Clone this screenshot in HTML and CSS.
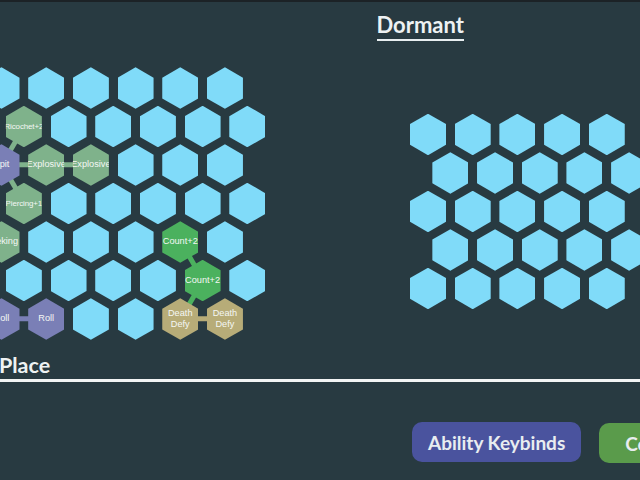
FILE: index.html
```html
<!DOCTYPE html>
<html lang="en">
  <head>
    <meta charset="UTF-8" />
    <meta name="viewport" content="width=device-width, initial-scale=1.0" />
    <title>Abilities</title>
    <link rel="stylesheet" href="styles.css">
  </head>
  <body>
    <div class="boards">
      <!-- Active board -->
      <div class="panel panel-active">
        <div class="grid">
          <svg class="links" width="270" height="280">
            <line class="link-sage" x1="40.35" y1="59.25" x2="18" y2="97.75" />
            <line class="link-sage" x1="18" y1="97.75" x2="107.4" y2="97.75" />
            <line class="link-sage" x1="18" y1="97.75" x2="40.35" y2="136.25" />
            <line class="link-violet" x1="18" y1="251.75" x2="62.7" y2="251.75" />
            <line class="link-green" x1="196.8" y1="174.75" x2="219.15" y2="213.25" />
            <line class="link-green" x1="219.15" y1="213.25" x2="196.8" y2="251.75" />
            <line class="link-tan" x1="196.8" y1="251.75" x2="241.5" y2="251.75" />
          </svg>
          <div class="row">
            <div class="hex"></div><div class="hex"></div><div class="hex"></div>
            <div class="hex"></div><div class="hex"></div><div class="hex"></div>
          </div>
          <div class="row odd">
            <div class="hex sage tiny">Ricochet+2</div><div class="hex"></div><div class="hex"></div>
            <div class="hex"></div><div class="hex"></div><div class="hex"></div>
          </div>
          <div class="row">
            <div class="hex violet">Spit</div><div class="hex sage">Explosive</div><div class="hex sage">Explosive</div>
            <div class="hex"></div><div class="hex"></div><div class="hex"></div>
          </div>
          <div class="row odd">
            <div class="hex sage tiny">Piercing+1</div><div class="hex"></div><div class="hex"></div>
            <div class="hex"></div><div class="hex"></div><div class="hex"></div>
          </div>
          <div class="row">
            <div class="hex sage">Seeking</div><div class="hex"></div><div class="hex"></div>
            <div class="hex"></div><div class="hex green">Count+2</div><div class="hex"></div>
          </div>
          <div class="row odd">
            <div class="hex"></div><div class="hex"></div><div class="hex"></div>
            <div class="hex"></div><div class="hex green">Count+2</div><div class="hex"></div>
          </div>
          <div class="row">
            <div class="hex violet">Roll</div><div class="hex violet">Roll</div><div class="hex"></div>
            <div class="hex"></div><div class="hex tan">Death Defy</div><div class="hex tan">Death Defy</div>
          </div>
        </div>
      </div>

      <!-- Dormant board -->
      <div class="panel panel-dormant">
        <h2 class="board-title">Dormant</h2>
        <div class="grid">
          <div class="row">
            <div class="hex"></div><div class="hex"></div><div class="hex"></div><div class="hex"></div><div class="hex"></div>
          </div>
          <div class="row odd">
            <div class="hex"></div><div class="hex"></div><div class="hex"></div><div class="hex"></div><div class="hex"></div>
          </div>
          <div class="row">
            <div class="hex"></div><div class="hex"></div><div class="hex"></div><div class="hex"></div><div class="hex"></div>
          </div>
          <div class="row odd">
            <div class="hex"></div><div class="hex"></div><div class="hex"></div><div class="hex"></div><div class="hex"></div>
          </div>
          <div class="row">
            <div class="hex"></div><div class="hex"></div><div class="hex"></div><div class="hex"></div><div class="hex"></div>
          </div>
        </div>
      </div>
    </div>

    <h2 class="section-title">Place</h2>

    <div class="actions">
      <button class="btn btn-blue">Ability Keybinds</button>
      <button class="btn btn-green">Confirm</button>
    </div>
  </body>
</html>
```

FILE: styles.css
```css
body {
  font-family: Lato, "Noto Sans", sans-serif;
  background-color: #283a41;
  color: #eef2f3;
  margin: 0;
  padding: 0;
  width: 640px;
  height: 480px;
  overflow: hidden;
  border-top: 2px solid #1c2226;
  box-sizing: border-box;
}

.boards {
  display: flex;
  align-items: flex-start;
  height: 350px;
}

.panel-active {
  width: 393px;
  margin-left: -16.5px;
  flex-shrink: 0;
  padding-top: 65.25px;
}

.panel-dormant {
  flex-shrink: 0;
  padding-top: 10.3px;
}

.board-title {
  display: block;
  width: fit-content;
  margin: 0;
  font-size: 22px;
  font-weight: 700;
  line-height: 26.4px;
  border-bottom: 2px solid #e8eef0;
}

.panel-dormant .grid {
  margin-top: 73px;
  margin-left: 33.5px;
  width: 300px;
}

/* hex grid */
.grid {
  position: relative;
}

.links {
  position: absolute;
  left: 0;
  top: 0;
  z-index: 0;
}

.links line {
  stroke-width: 5;
}

.link-sage {
  stroke: #7fb28b;
}

.link-violet {
  stroke: #7a7fb6;
}

.link-green {
  stroke: #4bb15e;
}

.link-tan {
  stroke: #b7ac78;
}

.row {
  display: flex;
  gap: 8.7px;
}

.row + .row {
  margin-top: -3px;
}

.row.odd {
  padding-left: 22.35px;
}

.hex {
  position: relative;
  z-index: 1;
  flex-shrink: 0;
  width: 36px;
  height: 41.5px;
  background-color: #80dbf9;
  clip-path: polygon(50% 0, 100% 25%, 100% 75%, 50% 100%, 0 75%, 0 25%);
  display: flex;
  align-items: center;
  justify-content: center;
  text-align: center;
  font-family: "Liberation Sans", Arial, sans-serif;
  font-size: 9.2px;
  line-height: 1.25;
  color: #f4f7f4;
}

.hex.tiny {
  font-size: 7.9px;
  letter-spacing: -0.1px;
}

.hex.sage {
  background-color: #7fb28b;
}

.hex.violet {
  background-color: #7a7fb6;
}

.hex.green {
  background-color: #4bb15e;
}

.hex.tan {
  background-color: #b7ac78;
}

.section-title {
  margin: 0 0 0 -1px;
  font-size: 21.5px;
  font-weight: 700;
  line-height: 26px;
  padding-bottom: 1px;
  border-bottom: 3px solid #f2f4f4;
}

.actions {
  display: flex;
  align-items: center;
  gap: 18px;
  margin-top: 39px;
  padding-left: 412px;
}

.btn {
  flex-shrink: 0;
  height: 40px;
  padding: 0 16px;
  font-family: Lato, "Noto Sans", sans-serif;
  font-size: 19px;
  font-weight: 700;
  color: #e8edf0;
  border: none;
  border-radius: 10px;
  cursor: pointer;
}

.btn-blue {
  background-color: #4a539e;
}

.btn-green {
  background-color: #5a9b4b;
  padding: 0 26px;
  margin-top: 2px;
}
```
